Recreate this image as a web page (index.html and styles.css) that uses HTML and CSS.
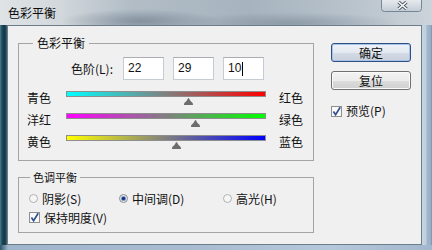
FILE: index.html
```html
<!DOCTYPE html>
<html lang="zh-CN">
<head>
<meta charset="utf-8">
<title>色彩平衡</title>
<link rel="stylesheet" href="styles.css">
</head>
<body>
<div class="window">
  <div class="titlebar">
    <span class="title">色彩平衡</span>
    <svg class="close" width="41" height="12" viewBox="0 0 41 12">
      <defs>
        <linearGradient id="cg" x1="0" y1="0" x2="0" y2="1">
          <stop offset="0" stop-color="#e6eaee"/>
          <stop offset="1" stop-color="#c2cbd4"/>
        </linearGradient>
      </defs>
      <path d="M0.5 0 V8.5 Q0.5 11.5 3.5 11.5 H37.5 Q40.5 11.5 40.5 8.5 V0" fill="url(#cg)" stroke="#76859a"/>
      <path d="M17.5 2 L25.5 9 M25.5 2 L17.5 9" stroke="#4d5866" stroke-width="3.4"/>
      <path d="M17.5 2 L25.5 9 M25.5 2 L17.5 9" stroke="#ffffff" stroke-width="1.6"/>
    </svg>
  </div>
  <div class="frame-mid">
    <div class="frame-left"></div>
    <div class="client">
      <div class="main">
        <fieldset class="group g1">
          <legend>色彩平衡</legend>
          <div class="levels">
            <span class="levels-label">色阶(L):</span>
            <div class="num">22</div>
            <div class="num">29</div>
            <div class="num">10<span class="caret"></span></div>
          </div>
          <div class="sliders">
            <div class="srow">
              <span class="lab">青色</span>
              <div class="track">
                <div class="bar bar-cr"></div>
                <svg class="thumb" style="left:calc(61% - 4px)" width="9" height="7" viewBox="0 0 9 7"><path d="M4.5 0 C5.6 0 5.6 2.5 7 3.6 C8.6 4.6 9 5.5 9 7 H0 C0 5.5 .4 4.6 2 3.6 C3.4 2.5 3.4 0 4.5 0Z" fill="#6d6d6d"/></svg>
              </div>
              <span class="lab lab-r">红色</span>
            </div>
            <div class="srow">
              <span class="lab">洋红</span>
              <div class="track">
                <div class="bar bar-mg"></div>
                <svg class="thumb" style="left:calc(64.5% - 4px)" width="9" height="7" viewBox="0 0 9 7"><path d="M4.5 0 C5.6 0 5.6 2.5 7 3.6 C8.6 4.6 9 5.5 9 7 H0 C0 5.5 .4 4.6 2 3.6 C3.4 2.5 3.4 0 4.5 0Z" fill="#6d6d6d"/></svg>
              </div>
              <span class="lab lab-r">绿色</span>
            </div>
            <div class="srow">
              <span class="lab">黄色</span>
              <div class="track">
                <div class="bar bar-yb"></div>
                <svg class="thumb" style="left:calc(55% - 4px)" width="9" height="7" viewBox="0 0 9 7"><path d="M4.5 0 C5.6 0 5.6 2.5 7 3.6 C8.6 4.6 9 5.5 9 7 H0 C0 5.5 .4 4.6 2 3.6 C3.4 2.5 3.4 0 4.5 0Z" fill="#6d6d6d"/></svg>
              </div>
              <span class="lab lab-r">蓝色</span>
            </div>
          </div>
        </fieldset>
        <fieldset class="group g2">
          <legend>色调平衡</legend>
          <div class="radios">
            <span class="opt">
              <svg class="radio" width="9" height="9" viewBox="0 0 9 9"><circle cx="4.5" cy="4.5" r="4" fill="#f6f6f6" stroke="#b0b0b0"/></svg>
              <span>阴影(S)</span>
            </span>
            <span class="opt">
              <svg class="radio" width="9" height="9" viewBox="0 0 9 9"><circle cx="4.5" cy="4.5" r="4" fill="#e9eef6" stroke="#8c8c8c"/><circle cx="4.5" cy="4.5" r="2.6" fill="#8da4d4"/><circle cx="4.5" cy="4.5" r="1.8" fill="#1c3781"/></svg>
              <span>中间调(D)</span>
            </span>
            <span class="opt">
              <svg class="radio" width="9" height="9" viewBox="0 0 9 9"><circle cx="4.5" cy="4.5" r="4" fill="#f6f6f6" stroke="#b0b0b0"/></svg>
              <span>高光(H)</span>
            </span>
          </div>
          <div class="check-row">
            <span class="opt">
              <svg class="cb" width="11" height="11" viewBox="0 0 11 11"><rect x=".5" y=".5" width="10" height="10" fill="#f2f2f2" stroke="#8f8f8f"/><rect x="1.5" y="1.5" width="8" height="8" fill="#fbfbfb"/><path d="M2.4 5.4 L4.6 8.6 L9.2 1.2" fill="none" stroke="#33508f" stroke-width="1.7"/></svg>
              <span>保持明度(V)</span>
            </span>
          </div>
        </fieldset>
      </div>
      <div class="side">
        <div class="btn btn-default">确定</div>
        <div class="btn">复位</div>
        <span class="opt preview">
          <svg class="cb" width="11" height="11" viewBox="0 0 11 11"><rect x=".5" y=".5" width="10" height="10" fill="#f2f2f2" stroke="#8f8f8f"/><rect x="1.5" y="1.5" width="8" height="8" fill="#fbfbfb"/><path d="M2.4 5.4 L4.6 8.6 L9.2 1.2" fill="none" stroke="#33508f" stroke-width="1.7"/></svg>
          <span>预览(P)</span>
        </span>
      </div>
    </div>
    <div class="frame-right"></div>
  </div>
  <div class="frame-bottom"></div>
</div>
</body>
</html>
```

FILE: styles.css
```css
* {
  box-sizing: border-box;
  margin: 0;
  padding: 0;
}

html, body {
  width: 432px;
  height: 250px;
  overflow: hidden;
}

body {
  font-family: "Noto Sans CJK SC", "Noto Sans", sans-serif;
  font-size: 12px;
  color: #111;
  background: #c9d1d8;
}

.window {
  width: 432px;
  height: 250px;
  display: flex;
  flex-direction: column;
}

.titlebar {
  height: 25px;
  display: flex;
  align-items: flex-start;
  justify-content: space-between;
  padding-left: 8px;
  background:
    radial-gradient(ellipse 80px 12px at 140px 21px, rgba(95, 112, 128, 0.55), rgba(95, 112, 128, 0)),
    radial-gradient(ellipse 110px 11px at 290px 23px, rgba(110, 126, 142, 0.5), rgba(110, 126, 142, 0)),
    linear-gradient(to right, #dfe3e6 0, #d2d8dc 60px, #b2bdc6 130px, #a7b3be 250px, #b6c1ca 340px, #ccd3da 432px);
}

.title {
  font-size: 12px;
  line-height: 14px;
  margin-top: 6px;
  color: #0c0c0c;
}

.close {
  display: block;
  margin-right: 10px;
}

.frame-mid {
  display: flex;
  height: 220px;
}

.frame-left {
  width: 7px;
  background: linear-gradient(to right, #4f7f8e 0, #1d4a5c 2px, #123545 5px, #3f6b7c 7px);
}

.client {
  width: 415px;
  border: 1px solid #6c7c88;
  background: #f0f0f0;
  display: flex;
  gap: 17px;
  padding: 10px 0 0 10px;
}

.frame-right {
  width: 10px;
  background: linear-gradient(to right, #c6d4e2 0, #c0cfde 4px, #a2b7cc 5px, #98aec6 9px, #6f86a0 10px);
}

.frame-bottom {
  height: 5px;
  background: linear-gradient(to right, #2a5667 0, #9fb5cc 8px, #a9bdd2 200px, #b5c7db 330px, #a2b7cd 432px);
}

/* group boxes */
.main {
  width: 296px;
  display: flex;
  flex-direction: column;
}

.group {
  border: 1px solid #a4a4a4;
  min-width: 0;
}

.group legend {
  font-size: 12px;
  line-height: 14px;
  color: #111;
}

.g1 {
  padding: 7px 0 9px 0;
}

.g1 legend {
  margin-left: 14px;
  padding: 0 4px;
}

.g2 {
  margin-top: 9px;
  padding: 5px 0 5px 0;
}

.g2 legend {
  font-size: 11px;
  margin-left: 11px;
  padding: 0 3px;
}

/* levels */
.levels {
  display: flex;
  align-items: center;
  height: 23px;
}

.levels-label {
  width: 94px;
  margin-right: 10px;
  text-align: right;
}

.num {
  width: 41px;
  height: 23px;
  margin-right: 9px;
  background: #fff;
  border: 1px solid #c6ccd4;
  border-top-color: #abadb3;
  font-family: "Liberation Sans", "Noto Sans", sans-serif;
  font-size: 12px;
  line-height: 21px;
  padding-left: 4px;
  color: #111;
  display: flex;
  align-items: center;
}

.caret {
  display: inline-block;
  width: 1px;
  height: 14px;
  background: #000;
  margin-left: 1px;
}

/* sliders */
.sliders {
  margin-top: 5px;
  display: flex;
  flex-direction: column;
}

.srow {
  height: 22px;
  display: grid;
  grid-template-columns: 39px 200px auto;
  padding-left: 8px;
  align-items: center;
}

.lab {
  line-height: 14px;
  padding-top: 3px;
  white-space: nowrap;
}

.lab-r {
  padding-left: 13px;
}

.track {
  position: relative;
  height: 22px;
}

.bar {
  margin-top: 6px;
  height: 6px;
  border: 1px solid #8e8e8e;
}

.bar-cr {
  background: linear-gradient(to right, #00ffff, #ff0000);
}

.bar-mg {
  background: linear-gradient(to right, #ff00ff, #00ff00);
}

.bar-yb {
  background: linear-gradient(to right, #ffff00, #0000ff);
}

.thumb {
  position: absolute;
  top: 13px;
  display: block;
}

/* tone balance */
.radios {
  display: grid;
  grid-template-columns: 90px 104px auto;
  padding-left: 10px;
  height: 19px;
  align-items: center;
}

.check-row {
  display: flex;
  padding-left: 10px;
  height: 19px;
  align-items: center;
}

.opt {
  display: flex;
  align-items: center;
  gap: 4px;
  line-height: 14px;
  white-space: nowrap;
}

.radio, .cb {
  display: block;
  flex: none;
}

/* side buttons */
.side {
  width: 80px;
  padding-top: 7px;
  display: flex;
  flex-direction: column;
}

.btn {
  height: 19px;
  border: 1px solid #707070;
  border-radius: 3px;
  background: linear-gradient(#f3f3f3 0%, #ececec 50%, #dddddd 51%, #cfcfcf 100%);
  box-shadow: inset 0 0 0 1px #fbfbfb;
  text-align: center;
  line-height: 17px;
  font-size: 12px;
  color: #111;
}

.btn + .btn {
  margin-top: 9px;
}

.btn-default {
  border-color: #2e4f86;
  background: linear-gradient(#eef2f8 0%, #e4e9f1 50%, #d4dbe6 51%, #c8d0dc 100%);
  box-shadow: inset 0 0 0 1px #a9c3e6;
}

.preview {
  margin-top: 14px;
  gap: 4px;
}
```
